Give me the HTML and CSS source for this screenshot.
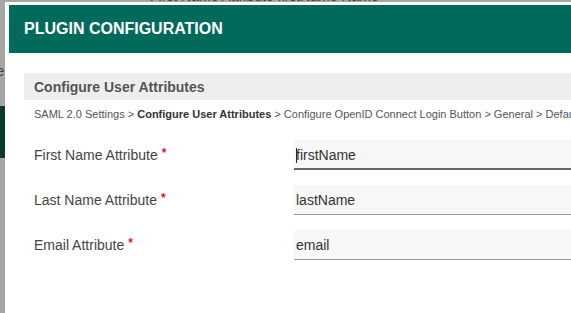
FILE: index.html
```html
<!DOCTYPE html>
<html>
<head>
<meta charset="utf-8">
<link rel="stylesheet" href="styles.css">
</head>
<body>
<div class="backdrop">
  <div class="bg-top"><span class="bg-top-text">First Name Attribute firstName Name</span></div>
  <div class="bg-side">Name</div>
  <div class="bg-block"></div>
</div>
<div class="modal">
  <div class="modal-header">PLUGIN CONFIGURATION</div>
  <div class="modal-body">
    <div class="section-bar">Configure User Attributes</div>
    <div class="breadcrumb">SAML 2.0 Settings &gt; <b>Configure User Attributes</b> &gt; Configure OpenID Connect Login Button &gt; General &gt; Default Settings</div>
    <div class="form">
      <label class="label">First Name Attribute <span class="req">*</span></label>
      <div class="field">
        <input class="input input-focus" type="text" value="firstName">
        <span class="caret"></span>
      </div>
      <label class="label">Last Name Attribute <span class="req">*</span></label>
      <div class="field">
        <input class="input" type="text" value="lastName">
      </div>
      <label class="label">Email Attribute <span class="req">*</span></label>
      <div class="field">
        <input class="input" type="text" value="email">
      </div>
    </div>
  </div>
</div>
</body>
</html>
```
FILE: styles.css
```css
html, body {
  margin: 0;
  padding: 0;
  width: 571px;
  height: 313px;
  overflow: hidden;
}
body {
  position: relative;
  background: #a6a7a5;
  font-family: "Liberation Sans", Arial, sans-serif;
}
.backdrop {
  display: flow-root;
  height: 313px;
}
.bg-top {
  height: 2px;
  overflow: hidden;
}
.bg-top-text {
  display: block;
  margin-top: -11px;
  padding-left: 150px;
  font-size: 14px;
  line-height: 14px;
  color: #3e3f3d;
  white-space: nowrap;
}
.bg-side {
  margin-top: 62px;
  margin-left: -33px;
  height: 14px;
  font-size: 14px;
  line-height: 14px;
  color: #3e3f3d;
}
.bg-block {
  margin-top: 28px;
  width: 5px;
  height: 52px;
  background: #0a3a2d;
}
.modal {
  position: absolute;
  left: 5px;
  top: 2px;
  width: 700px;
  height: 340px;
  background: #fff;
  padding: 3px 0 0 4px;
  box-sizing: border-box;
}
.modal-header {
  height: 48px;
  background: #026a5a;
  color: #fff;
  font-weight: bold;
  font-size: 16px;
  display: flex;
  align-items: center;
  padding-left: 15px;
}
.modal-body {
  padding: 20px 0 0 15px;
}
.section-bar {
  height: 27px;
  background: #eeeeee;
  color: #555;
  font-weight: bold;
  font-size: 14px;
  display: flex;
  align-items: center;
  padding-left: 10px;
}
.breadcrumb {
  padding: 8px 0 0 10px;
  font-size: 11px;
  line-height: 13px;
  color: #555;
  white-space: nowrap;
}
.breadcrumb b {
  color: #333;
}
.form {
  margin-top: 19px;
  padding-left: 10px;
  display: grid;
  grid-template-columns: 260px 1fr;
  row-gap: 15px;
}
.label {
  display: flex;
  align-items: center;
  font-size: 14px;
  color: #444;
}
.req {
  color: #e0161b;
  font-weight: bold;
  font-size: 12px;
  margin-left: 4px;
  position: relative;
  top: -2px;
}
.field {
  position: relative;
}
.input {
  display: block;
  width: 100%;
  height: 30px;
  box-sizing: border-box;
  margin: 0;
  border: none;
  border-bottom: 1px solid #9a9a9a;
  background: #f7f7f7;
  padding: 0 2px;
  font-family: "Liberation Sans", Arial, sans-serif;
  font-size: 14px;
  color: #333;
  outline: none;
}
.input-focus {
  border-bottom: 2px solid #666;
  padding-top: 1px;
}
.caret {
  position: absolute;
  left: 2px;
  top: 8px;
  width: 1px;
  height: 15px;
  background: #222;
}
```
